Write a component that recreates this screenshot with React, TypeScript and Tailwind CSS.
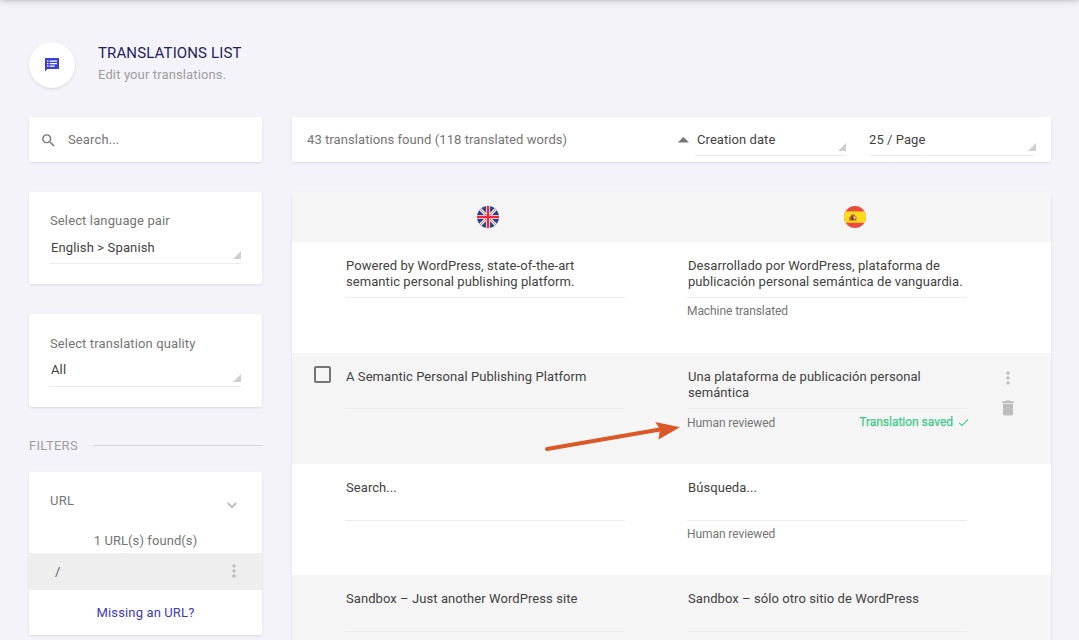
import React from "react";
import { MdCheck, MdDelete, MdMoreVert, MdSearch } from "react-icons/md";

const card = "rounded-[2px] bg-white shadow-[0_1px_3px_rgba(0,0,0,0.10)]";

function Corner() {
  return (
    <svg width="8" height="8" viewBox="0 0 8 8" className="shrink-0">
      <path d="M8 0V8H0Z" fill="#cfcfcf" />
    </svg>
  );
}

function FilterSelect({
  label,
  value,
  className,
  valueClassName,
}: {
  label: string;
  value: string;
  className: string;
  valueClassName: string;
}) {
  return (
    <section className={`${card} ${className} px-[21px]`}>
      <div className="h-4 text-[#757575]">{label}</div>
      <div
        className={`flex items-start justify-between border-b border-[#ececec] pl-px text-[#424242] ${valueClassName}`}
      >
        <span>{value}</span>
        <span className="self-end pb-1">
          <Corner />
        </span>
      </div>
    </section>
  );
}

function NotesIcon() {
  return (
    <svg width="14" height="14" viewBox="0 0 14 14" className="-mt-px">
      <path d="M0 0H14V11H2.4L0 13.4Z" fill="#3c40d0" />
      <path
        d="M2 3.1H3.5M2 5.6H3.5M2 8.1H3.5M4.7 3.1H12M4.7 5.6H12M4.7 8.1H9.6"
        stroke="#fff"
        strokeWidth="1.2"
      />
    </svg>
  );
}

function UkFlag() {
  return (
    <svg width="22" height="22" viewBox="0 0 22 22">
      <clipPath id="uk">
        <circle cx="11" cy="11" r="11" />
      </clipPath>
      <g clipPath="url(#uk)">
        <rect width="22" height="22" fill="#20428f" />
        <path d="M1 1L21 21M21 1L1 21" stroke="#fff" strokeWidth="3" />
        <path d="M1 1L21 21M21 1L1 21" stroke="#ef5a5f" strokeWidth="1" />
        <path d="M11 0V22M0 11H22" stroke="#f4e9ee" strokeWidth="4.2" />
        <path d="M11 0V22M0 11H22" stroke="#ee2636" strokeWidth="2.4" />
      </g>
    </svg>
  );
}

function SpainFlag() {
  return (
    <svg width="22" height="22" viewBox="0 0 22 22">
      <clipPath id="es">
        <circle cx="11" cy="11" r="11" />
      </clipPath>
      <g clipPath="url(#es)">
        <rect width="22" height="22" fill="#e94b3f" />
        <rect y="5.4" width="22" height="11.4" fill="#ffd91b" />
        <path d="M7 8.5h3.8v1.2l1.7 1v3.8H5.2v-3.2L7 10z" fill="#b56a2a" />
        <path d="M7.3 10.5h2v3.8h-2z" fill="#8c3028" />
        <path d="M9.6 10.4h2v2h-2z" fill="#e9dccb" />
      </g>
    </svg>
  );
}

type Row = {
  source: string;
  target: string;
  quality: string;
  active?: boolean;
  shaded?: boolean;
  fieldClass: string;
  labelClass: string;
};

const rows: Row[] = [
  {
    source: "Powered by WordPress, state-of-the-art semantic personal publishing platform.",
    target: "Desarrollado por WordPress, plataforma de publicación personal semántica de vanguardia.",
    quality: "Machine translated",
    fieldClass: "h-10",
    labelClass: "pt-[5px]",
  },
  {
    source: "A Semantic Personal Publishing Platform",
    target: "Una plataforma de publicación personal semántica",
    quality: "Human reviewed",
    active: true,
    shaded: true,
    fieldClass: "h-10",
    labelClass: "pt-[6px]",
  },
  {
    source: "Search...",
    target: "Búsqueda...",
    quality: "Human reviewed",
    fieldClass: "h-[41px]",
    labelClass: "pt-[5px]",
  },
  {
    source: "Sandbox – Just another WordPress site",
    target: "Sandbox – sólo otro sitio de WordPress",
    quality: "Machine translated",
    shaded: true,
    fieldClass: "h-[41px]",
    labelClass: "pt-[6px]",
  },
];

function TranslationRow({ row }: { row: Row }) {
  const field = `w-[280px] border-b border-[#ececec] pl-px text-[#424242] ${row.fieldClass}`;
  return (
    <div className={`flex h-[111px] shrink-0 pt-4 ${row.shaded ? "bg-[#f5f5f5]" : "bg-white"}`}>
      <div className="-mt-[3px] w-[53px] shrink-0 pl-[22px]">
        {row.active && <div className="h-[17px] w-[17px] rounded-[2px] border-2 border-[#757575]" />}
      </div>
      <div className="w-[342px] shrink-0">
        <div className={field}>{row.source}</div>
      </div>
      <div className="w-[282px] shrink-0">
        <div className={field}>{row.target}</div>
        <div className={`flex justify-between text-[12px] tracking-[-0.08px] text-[#757575] ${row.labelClass}`}>
          <span>{row.quality}</span>
          {row.active && (
            <span className="-mr-px -mt-[2px] flex items-center gap-1 text-[#3ecb8a]">
              <span className="tracking-[-0.02px] [-webkit-text-stroke:0.25px_#3ecb8a]">Translation saved</span>
              <MdCheck size={13} />
            </span>
          )}
        </div>
      </div>
      {row.active && (
        <div className="-mt-px ml-[29px] flex flex-col items-center gap-[10px] text-[#bdbdbd]">
          <MdMoreVert size={20} />
          <MdDelete size={20} />
        </div>
      )}
    </div>
  );
}

export default function App() {
  return (
    <div className="relative h-[640px] w-[1079px] overflow-hidden bg-[#f4f3f9] pl-[29px] font-[Roboto,sans-serif] text-[13px] leading-4 tracking-[0.07px]">
      <div className="absolute inset-x-0 -top-[10px] h-[10px] shadow-[0_0_7px_rgba(0,0,0,0.3)]" />
      <header className="flex h-[117px] items-start pt-[42px]">
        <div className="flex h-[46px] w-[46px] items-center justify-center rounded-full bg-white shadow-[0_1px_3px_rgba(0,0,0,0.12)]">
          <NotesIcon />
        </div>
        <div className="pl-[23px]">
          <h1 className="mt-px text-[15px] leading-5 tracking-[0.13px] text-[#251f59]">TRANSLATIONS LIST</h1>
          <p className="mt-1 tracking-[0.13px] text-[#9e9e9e]">Edit your translations.</p>
        </div>
      </header>
      <main className="flex items-start gap-[30px]">
        <aside className="w-[233px] shrink-0 tracking-[0.13px]">
          <div className={`${card} flex h-[45px] items-center pl-[11px] text-[#757575]`}>
            <MdSearch size={17} className="mt-[2px]" />
            <span className="pl-[11px]">Search...</span>
          </div>
          <FilterSelect
            className="mt-[30px] h-[92px] pt-[21px]"
            valueClassName="mt-[11px] h-6"
            label="Select language pair"
            value="English > Spanish"
          />
          <FilterSelect
            className="mt-[30px] h-[93px] pt-[22px]"
            valueClassName="mt-[10px] h-[25px]"
            label="Select translation quality"
            value="All"
          />
          <div className="mt-[31px] flex h-4 items-center gap-[15px] text-[#9e9e9e]">
            <span className="tracking-[0.3px]">FILTERS</span>
            <span className="-mt-px h-px flex-1 bg-[#d5d6dd]" />
          </div>
          <section className={`${card} mt-[18px] h-[163px]`}>
            <div className="flex h-[60px] items-start justify-between pl-[21px] pr-[25px] pt-[21px] text-[#757575]">
              <span className="tracking-[0.3px]">URL</span>
              <svg width="10" height="7" viewBox="0 0 10 7" className="mt-[9px]">
                <path d="M0.8 1L5 5.2L9.2 1" fill="none" stroke="#bdbdbd" strokeWidth="1.9" />
              </svg>
            </div>
            <div className="h-[21px] pt-px text-center tracking-[0.08px] text-[#757575]">1 URL(s) found(s)</div>
            <div className="flex h-[37px] items-center justify-between bg-[#eeeeee] pl-[26px] pr-[18px] text-[#616161]">
              <span>/</span>
              <MdMoreVert size={20} className="-mt-[2px] text-[#bdbdbd]" />
            </div>
            <div className="pt-[15px] text-center text-[#3c38c8]">Missing an URL?</div>
          </section>
        </aside>
        <div className="w-[759px] shrink-0">
          <div className={`${card} flex h-[45px] pl-[15px] pt-[15px] text-[#757575]`}>
            <span className="w-[370px]">43 translations found (118 translated words)</span>
            <svg width="12" height="6" viewBox="0 0 12 6" className="mt-[5px]">
              <path d="M0.8 5.6L6.4 0L12 5.6Z" fill="#757575" />
            </svg>
            <div className="ml-[6px] flex h-6 w-[151px] justify-between border-b border-[#ececec] pl-[2px] text-[#424242]">
              <span>Creation date</span>
              <span className="pt-[11px]">
                <Corner />
              </span>
            </div>
            <div className="ml-[22px] flex h-6 w-[168px] justify-between border-b border-[#ececec] pl-px text-[#424242]">
              <span>25 / Page</span>
              <span className="pt-[11px]">
                <Corner />
              </span>
            </div>
          </div>
          <section className={`${card} mt-[30px] overflow-hidden`}>
            <div className="flex h-[50px] items-center bg-[#f5f5f5] pl-[185px]">
              <UkFlag />
              <span className="w-[345px]" />
              <SpainFlag />
            </div>
            {rows.map((row) => (
              <TranslationRow key={row.source} row={row} />
            ))}
          </section>
        </div>
      </main>
      <svg className="absolute left-[540px] top-[415px]" width="145" height="42" viewBox="0 0 145 42">
        <path d="M7 34L120 14.5" stroke="#dc5828" strokeWidth="4" strokeLinecap="round" />
        <path d="M140 12.3L115.2 7L120 14L118.4 24.6Z" fill="#dc5828" />
      </svg>
    </div>
  );
}
